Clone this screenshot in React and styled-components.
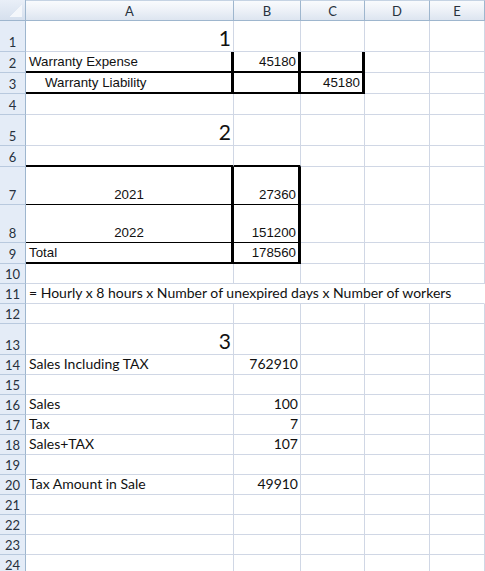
import React from 'react';
import styled, { createGlobalStyle } from 'styled-components';

const GlobalStyle = createGlobalStyle`
  html, body {
    margin: 0;
    padding: 0;
    background: #fff;
  }
  body {
    width: 485px;
    height: 571px;
    overflow: hidden;
  }
`;

const GRID = '#d0d7e5';
const HEAD_LINE = '#9eb6ce';
const ARIAL = '"Liberation Sans", Arial, sans-serif';
const CALIBRI = 'Lato, "Open Sans", sans-serif';

const Sheet = styled.div`
  display: grid;
  grid-template-columns: 26px 208px 67px 64px 65px 1fr;
  grid-template-rows: ${p => p.$rows};
  width: 485px;
`;

const Corner = styled.div`
  box-sizing: border-box;
  background: linear-gradient(#e9eff8, #d6e0ee);
  border-right: 1px solid ${HEAD_LINE};
  border-bottom: 1px solid ${HEAD_LINE};
  display: flex;
  align-items: flex-end;
  justify-content: flex-end;
  padding: 0 3px 3px 0;
`;

const CornerMark = styled.div`
  width: 12px;
  height: 12px;
  background: linear-gradient(135deg, transparent 50%, #f4f7fb 50%);
`;

const ColHead = styled.div`
  box-sizing: border-box;
  background: linear-gradient(#f9fbfd 0%, #eef2f8 45%, #dde5f0 100%);
  border-right: 1px solid ${HEAD_LINE};
  border-bottom: 1px solid ${HEAD_LINE};
  border-top: 1px solid #c5d3e3;
  display: flex;
  align-items: center;
  justify-content: center;
  font-family: ${CALIBRI};
  font-size: 13px;
  color: #27313d;
`;

const RowHead = styled.div`
  box-sizing: border-box;
  background: #e4ecf7;
  border-right: 1px solid ${HEAD_LINE};
  border-bottom: 1px solid #b8c9de;
  display: flex;
  align-items: flex-end;
  justify-content: center;
  padding-bottom: 1px;
  font-family: ${CALIBRI};
  font-size: 13px;
  line-height: 16px;
  color: #27313d;
`;

const edge = (kind, thinColor) => {
  if (kind === 'thick') return '2px solid #000';
  if (kind === 'heavy') return '3px solid #000';
  if (kind === 'line') return '1px solid #000';
  if (kind === 'none') return '1px solid transparent';
  return `1px solid ${thinColor}`;
};

const Cell = styled.div`
  box-sizing: border-box;
  grid-column: ${p => (p.$span ? `span ${p.$span}` : 'auto')};
  border-right: ${p => edge(p.$right, GRID)};
  border-bottom: ${p => edge(p.$bottom, GRID)};
  display: flex;
  align-items: flex-end;
  justify-content: ${p =>
    p.$align === 'right' ? 'flex-end' : p.$align === 'center' ? 'center' : 'flex-start'};
  padding: 0 2px 1px ${p => 3 + (p.$indent || 0)}px;
  font-family: ${p => (p.$font === 'calibri' ? CALIBRI : ARIAL)};
  font-size: ${p => p.$size || 13.3}px;
  line-height: ${p => (p.$size ? p.$size + 4 : 17)}px;
  color: #111;
  white-space: nowrap;
  overflow: visible;
`;

// each row: height + cells for columns A..E
const rows = [
  { h: 31, cells: [{ text: '1', align: 'right', font: 'calibri', size: 21 }, {}, {}, {}, {}] },
  {
    h: 21,
    cells: [
      { text: 'Warranty Expense', right: 'heavy', bottom: 'thick' },
      { text: '45180', align: 'right', right: 'heavy', bottom: 'thick' },
      { right: 'heavy', bottom: 'thick' },
      {},
      {},
    ],
  },
  {
    h: 21,
    cells: [
      { text: 'Warranty Liability', indent: 16, right: 'heavy', bottom: 'thick' },
      { right: 'heavy', bottom: 'thick' },
      { text: '45180', align: 'right', right: 'heavy', bottom: 'thick' },
      {},
      {},
    ],
  },
  { h: 21, cells: [{}, {}, {}, {}, {}] },
  { h: 31, cells: [{ text: '2', align: 'right', font: 'calibri', size: 21 }, {}, {}, {}, {}] },
  { h: 21, cells: [{ bottom: 'thick' }, { bottom: 'thick' }, {}, {}, {}] },
  {
    h: 38,
    cells: [
      { text: '2021', align: 'center', right: 'heavy', bottom: 'line' },
      { text: '27360', align: 'right', right: 'heavy', bottom: 'line' },
      {},
      {},
      {},
    ],
  },
  {
    h: 38,
    cells: [
      { text: '2022', align: 'center', right: 'heavy', bottom: 'line' },
      { text: '151200', align: 'right', right: 'heavy', bottom: 'line' },
      {},
      {},
      {},
    ],
  },
  {
    h: 21,
    cells: [
      { text: 'Total', right: 'heavy', bottom: 'thick' },
      { text: '178560', align: 'right', right: 'heavy', bottom: 'thick' },
      {},
      {},
      {},
    ],
  },
  { h: 20, cells: [{}, {}, {}, {}, {}] },
  {
    h: 20,
    cells: [
      {
        text: '= Hourly x 8 hours x Number of unexpired days x Number of workers',
        font: 'calibri',
        size: 14,
        span: 5,
        right: 'none',
      },
    ],
  },
  { h: 20, cells: [{}, {}, {}, {}, {}] },
  { h: 31, cells: [{ text: '3', align: 'right', font: 'calibri', size: 21 }, {}, {}, {}, {}] },
  {
    h: 20,
    cells: [
      { text: 'Sales Including TAX', font: 'calibri', size: 14 },
      { text: '762910', align: 'right', font: 'calibri', size: 14 },
      {},
      {},
      {},
    ],
  },
  { h: 20, cells: [{}, {}, {}, {}, {}] },
  {
    h: 20,
    cells: [
      { text: 'Sales', font: 'calibri', size: 14 },
      { text: '100', align: 'right', font: 'calibri', size: 14 },
      {},
      {},
      {},
    ],
  },
  {
    h: 20,
    cells: [
      { text: 'Tax', font: 'calibri', size: 14 },
      { text: '7', align: 'right', font: 'calibri', size: 14 },
      {},
      {},
      {},
    ],
  },
  {
    h: 20,
    cells: [
      { text: 'Sales+TAX', font: 'calibri', size: 14 },
      { text: '107', align: 'right', font: 'calibri', size: 14 },
      {},
      {},
      {},
    ],
  },
  { h: 20, cells: [{}, {}, {}, {}, {}] },
  {
    h: 20,
    cells: [
      { text: 'Tax Amount in Sale', font: 'calibri', size: 14 },
      { text: '49910', align: 'right', font: 'calibri', size: 14 },
      {},
      {},
      {},
    ],
  },
  { h: 20, cells: [{}, {}, {}, {}, {}] },
  { h: 20, cells: [{}, {}, {}, {}, {}] },
  { h: 20, cells: [{}, {}, {}, {}, {}] },
  { h: 20, cells: [{}, {}, {}, {}, {}] },
];

const columns = ['A', 'B', 'C', 'D', 'E'];

const App = () => {
  const template = ['21px', ...rows.map(r => `${r.h}px`)].join(' ');
  return (
    <>
      <GlobalStyle />
      <Sheet $rows={template}>
        <Corner>
          <CornerMark />
        </Corner>
        {columns.map(c => (
          <ColHead key={c}>{c}</ColHead>
        ))}
        {rows.map((row, i) => (
          <React.Fragment key={i}>
            <RowHead>{i + 1}</RowHead>
            {row.cells.map((cell, j) => (
              <Cell
                key={j}
                $align={cell.align}
                $indent={cell.indent}
                $font={cell.font}
                $size={cell.size}
                $span={cell.span}
                $right={cell.right}
                $bottom={cell.bottom}
              >
                {cell.text}
              </Cell>
            ))}
          </React.Fragment>
        ))}
      </Sheet>
    </>
  );
};

export default App;
